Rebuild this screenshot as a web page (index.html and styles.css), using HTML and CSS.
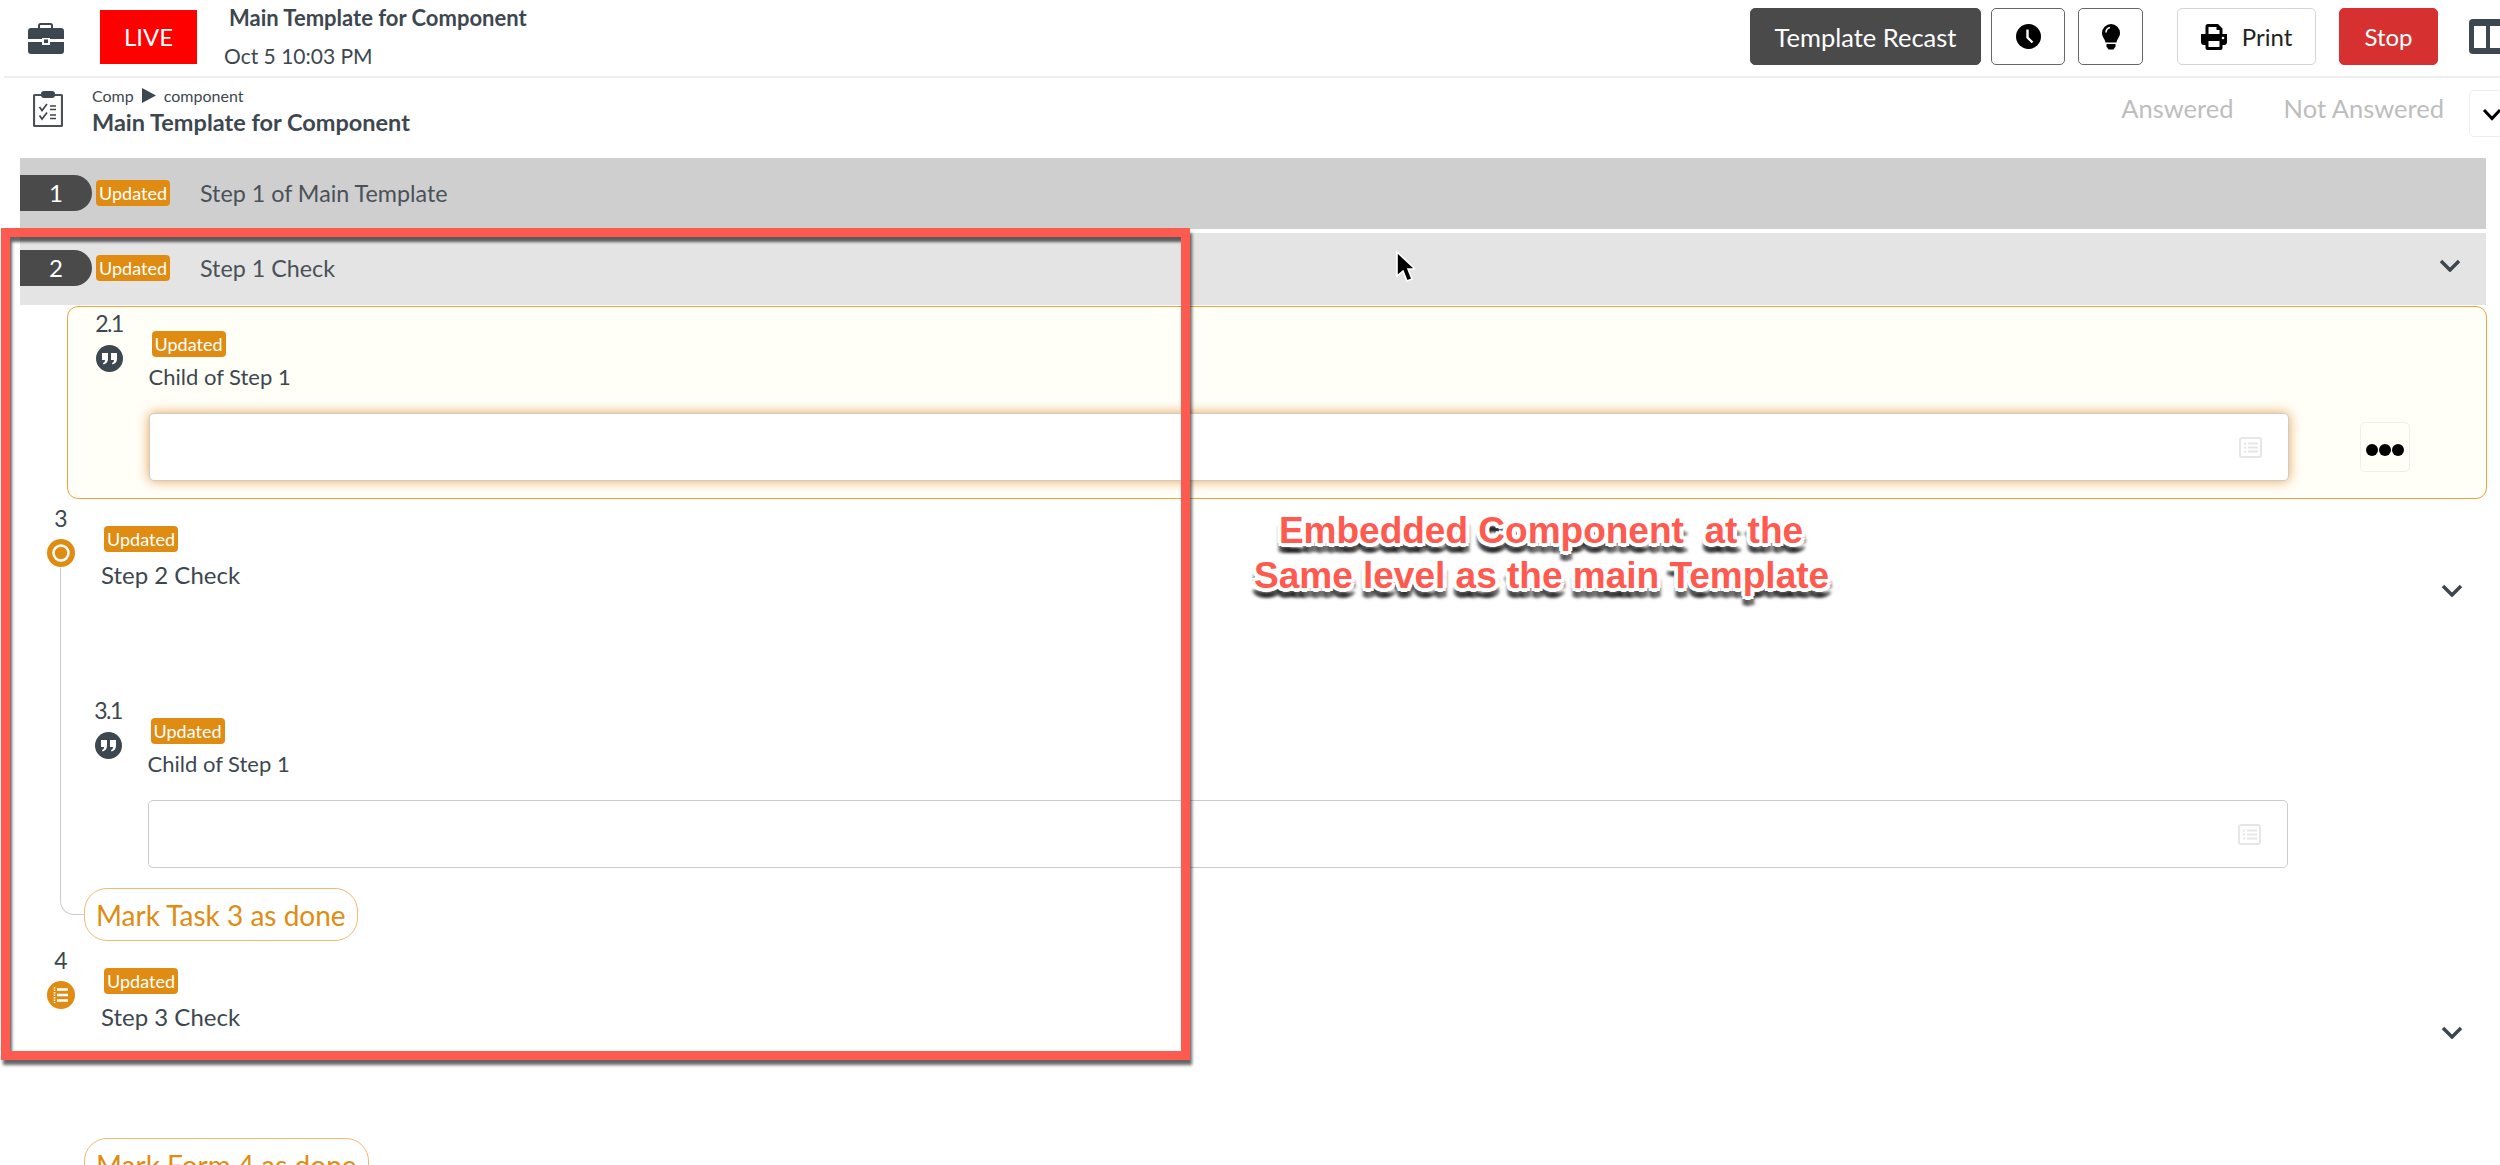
FILE: index.html
```html
<!DOCTYPE html>
<html lang="en">
<head>
<meta charset="utf-8">
<title>Main Template for Component</title>
<link rel="stylesheet" href="styles.css">
</head>
<body>
<header class="topbar">
  <svg class="ic-brief" viewBox="0 0 36 31"><path fill="none" stroke="#3d4750" stroke-width="2" d="M11 6V2.500a1.500 1.500 0 0 1 1.500-1.500h10a1.500 1.500 0 0 1 1.500 1.500V6"/><path fill="#3d4750" d="M3 5h30a3 3 0 0 1 3 3v8H22v-1h-8v1H0V8a3 3 0 0 1 3-3zM0 19h14v3h8v-3h14v9a3 3 0 0 1-3 3H3a3 3 0 0 1-3-3z"/><rect x="16" y="16.500" width="4" height="3.500" fill="#3d4750"/></svg>
  <div class="live">LIVE</div>
  <div class="run">
    <div class="run-title">Main Template for Component</div>
    <div class="run-date">Oct 5 10:03 PM</div>
  </div>
  <div class="actions">
    <button class="btn btn-dark">Template Recast</button>
    <button class="btn btn-line btn-clock">
      <svg class="ic-clock" viewBox="0 0 25 25"><circle cx="12.500" cy="12.500" r="12.500"/><path d="M11.500 5.500v8l5 5" fill="none" stroke="#fff" stroke-width="2.400"/></svg>
    </button>
    <button class="btn btn-line btn-bulb">
      <svg class="ic-bulb" viewBox="0 0 18 26"><path d="M9 0a9 9 0 0 1 9 9c0 4-3 6-3.500 9.500h-11C3 15 0 13 0 9a9 9 0 0 1 9-9z"/><path d="M4.500 20h9v2.500L11.500 25.500h-5L4.500 22.500z"/><path d="M8 3.500C5.500 4 4 6 4 8.500" fill="none" stroke="#fff" stroke-width="1.500"/></svg>
    </button>
    <button class="btn btn-print">
      <svg class="ic-print" viewBox="0 0 26 26"><path fill-rule="evenodd" d="M7 0h10l4.500 4.500V10H26v8a3 3 0 0 1-3 3h-1.500v3a2 2 0 0 1-2 2h-13a2 2 0 0 1-2-2v-3H3a3 3 0 0 1-3-3v-8h4.500V2.500A2.500 2.500 0 0 1 7 0zM7.500 3v7h11V6h-3V3zM7.500 17v6h11v-6z"/><circle cx="22" cy="14" r="1.300" fill="#fff"/></svg>
      Print
    </button>
    <button class="btn btn-stop">Stop</button>
    <svg class="ic-panes" viewBox="0 0 31 35"><path fill="#3d4750" d="M4 0h27v35H4a4 4 0 0 1-4-4V4a4 4 0 0 1 4-4z"/><rect x="5" y="7" width="12" height="22" fill="#fff"/><rect x="21" y="7" width="10" height="22" fill="#fff"/></svg>
  </div>
</header>

<section class="subhead">
  <svg class="ic-clip" viewBox="0 0 30 36"><rect x="1" y="4" width="28" height="31" rx="1" fill="none" stroke="#4a5158" stroke-width="2.200"/><rect x="8" y="0" width="14" height="7" rx="3" fill="#3d4750"/><path d="M6.500 16l2.500 3.500 5-6.500M6.500 24.500l2.500 3.500 5-6.500" fill="none" stroke="#3d4750" stroke-width="1.700"/><path d="M17 15h6M17 18.500h6M17 24h6M17 27.500h6" stroke="#3d4750" stroke-width="1.700"/></svg>
  <div class="crumbs">
    <div class="crumb-line"><span>Comp</span><svg class="ic-tri" viewBox="0 0 14 15"><path d="M0 0l14 7.500L0 15z" fill="#3d4750"/></svg><span>component</span></div>
    <div class="doc-title">Main Template for Component</div>
  </div>
  <div class="filters">
    <span>Answered</span>
    <span>Not Answered</span>
  </div>
  <div class="drop">
    <svg class="ic-chev-black" viewBox="0 0 20 13"><path d="M2 2l8 8.500L18 2" fill="none" stroke="#000" stroke-width="3"/></svg>
  </div>
</section>

<main class="steps">
  <div class="bar bar-dark">
    <span class="pill-num">1</span>
    <span class="badge">Updated</span>
    <span class="bar-title">Step 1 of Main Template</span>
  </div>
  <div class="bar bar-light">
    <span class="pill-num">2</span>
    <span class="badge">Updated</span>
    <span class="bar-title">Step 1 Check</span>
    <svg class="chev bar-chev" viewBox="0 0 22 13"><path d="M2 2l9 9 9-9" fill="none" stroke="#3d4750" stroke-width="3.500"/></svg>
  </div>

  <div class="child card">
    <div class="rail-child">
      <div class="num num-tight">2.1</div>
      <svg class="dot-quote" viewBox="0 0 27 27"><circle cx="13.500" cy="13.500" r="13.500" fill="#3d4750"/><path fill="#fff" d="M6 8h6v6c0 3-2 5-4.500 5.500L7 18c1.500-.5 2-1.500 2-3H6zM15 8h6v6c0 3-2 5-4.500 5.500L16 18c1.500-.5 2-1.500 2-3h-3z"/></svg>
    </div>
    <div class="child-body">
      <span class="badge badge-in">Updated</span>
      <div class="child-title">Child of Step 1</div>
      <div class="field-row">
        <div class="field field-focus">
          <svg class="ic-table" viewBox="0 0 23 21"><rect x="1" y="1" width="21" height="19" rx="2" fill="none" stroke="#e6e6e6" stroke-width="2"/><path d="M5 6.500h2M9 6.500h10M5 10.500h2M9 10.500h10M5 14.500h2M9 14.500h10" stroke="#e6e6e6" stroke-width="2"/></svg>
        </div>
        <div class="more"><i></i><i></i><i></i></div>
      </div>
    </div>
  </div>

  <div class="task task-line">
    <div class="task-head">
      <div class="rail">
        <div class="num">3</div>
        <svg class="dot-task" viewBox="0 0 28 28"><circle cx="14" cy="14" r="14" fill="#e08c12"/><circle cx="14" cy="14" r="7.500" fill="none" stroke="#fff" stroke-width="2.500"/></svg>
      </div>
      <div class="task-body">
        <span class="badge badge-in">Updated</span>
        <div class="task-title">Step 2 Check</div>
      </div>
      <svg class="chev task-chev" viewBox="0 0 22 13"><path d="M2 2l9 9 9-9" fill="none" stroke="#3d4750" stroke-width="3.500"/></svg>
    </div>
    <div class="child child-plain">
      <div class="rail-child">
        <div class="num num-tight">3.1</div>
        <svg class="dot-quote" viewBox="0 0 27 27"><circle cx="13.500" cy="13.500" r="13.500" fill="#3d4750"/><path fill="#fff" d="M6 8h6v6c0 3-2 5-4.500 5.500L7 18c1.500-.5 2-1.500 2-3H6zM15 8h6v6c0 3-2 5-4.500 5.500L16 18c1.500-.5 2-1.500 2-3h-3z"/></svg>
      </div>
      <div class="child-body">
        <span class="badge badge-in">Updated</span>
        <div class="child-title">Child of Step 1</div>
        <div class="field-row">
          <div class="field">
            <svg class="ic-table" viewBox="0 0 23 21"><rect x="1" y="1" width="21" height="19" rx="2" fill="none" stroke="#e6e6e6" stroke-width="2"/><path d="M5 6.500h2M9 6.500h10M5 10.500h2M9 10.500h10M5 14.500h2M9 14.500h10" stroke="#e6e6e6" stroke-width="2"/></svg>
          </div>
        </div>
      </div>
    </div>
    <div class="mark mark-task">Mark Task 3 as done</div>
  </div>

  <div class="task">
    <div class="task-head">
      <div class="rail">
        <div class="num">4</div>
        <svg class="dot-task" viewBox="0 0 28 28"><circle cx="14" cy="14" r="14" fill="#e08c12"/><path d="M10 8.500h11M10 14h11M10 19.500h11" stroke="#fff" stroke-width="2.400"/><path d="M7.500 6v16" stroke="#fff" stroke-width="1.600" stroke-dasharray="1.500 1"/></svg>
      </div>
      <div class="task-body">
        <span class="badge badge-in">Updated</span>
        <div class="task-title">Step 3 Check</div>
      </div>
      <svg class="chev task-chev" viewBox="0 0 22 13"><path d="M2 2l9 9 9-9" fill="none" stroke="#3d4750" stroke-width="3.500"/></svg>
    </div>
    <div class="mark mark-form">Mark Form 4 as done</div>
  </div>
</main>

<div class="redbox"></div>
<div class="note">Embedded Component  at the
Same level as the main Template</div>
<svg class="cursor" viewBox="0 0 20 31"><path d="M2 1v24l6-5 4 10 5-2-4-10h7z" fill="#000" stroke="#fff" stroke-width="1.600"/></svg>
</body>
</html>
```

FILE: styles.css
```css
* { box-sizing: border-box; }
html, body { margin: 0; padding: 0; background: #fff; }
body {
  position: relative;
  width: 2500px;
  height: 1165px;
  overflow: hidden;
  font-family: Lato, "Open Sans", sans-serif;
  color: #3d4750;
}

/* top bar */
.topbar {
  display: flex;
  align-items: center;
  height: 78px;
  margin-left: 4px;
  padding: 0 0 3px 24px;
  border-bottom: 2px solid #eee;
}
.ic-brief { width: 36px; height: 31px; flex: none; margin-top: 3px; }
.live {
  width: 97px;
  height: 54px;
  margin-left: 36px;
  background: #f00;
  color: #fff;
  font-size: 24px;
  line-height: 54px;
  text-align: center;
}
.run { margin-left: 27px; }
.run-title {
  margin-left: 5px;
  font-size: 22px;
  font-weight: 700;
  line-height: 28px;
}
.run-date {
  margin-top: 10px;
  font-size: 21px;
  line-height: 28px;
}
.actions {
  display: flex;
  align-items: center;
  margin-left: auto;
}
.btn {
  height: 57px;
  border-radius: 5px;
  font-family: inherit;
  font-size: 24px;
  padding: 0;
  display: flex;
  align-items: center;
  justify-content: center;
}
.btn-dark { width: 231px; background: #4a4a4a; border: 1px solid #4a4a4a; color: #fff; font-size: 25.500px; }
.btn-line { background: #fff; border: 1.500px solid #666; }
.btn-clock { width: 74px; margin-left: 10px; }
.btn-bulb { width: 65px; margin-left: 13px; }
.ic-clock { width: 25px; height: 25px; }
.ic-bulb { width: 18px; height: 26px; }
.btn-print {
  width: 139px;
  margin-left: 34px;
  background: #fff;
  border: 1.500px solid #d5d5d5;
  color: #222;
  gap: 15px;
}
.ic-print { width: 26px; height: 26px; }
.btn-stop { width: 99px; margin-left: 23px; background: #d63031; border: 1px solid #d63031; color: #fff; }
.ic-panes { width: 31px; height: 35px; margin-left: 31px; flex: none; }

/* sub header */
.subhead {
  display: flex;
  height: 80px;
  padding-left: 33px;
  position: relative;
}
.ic-clip { width: 30px; height: 36px; margin-top: 13px; flex: none; }
.crumbs { margin-left: 29px; }
.crumb-line {
  display: flex;
  align-items: center;
  height: 24px;
  margin-top: 5px;
  font-size: 16px;
  gap: 8px;
}
.ic-tri { width: 14px; height: 15px; }
.doc-title {
  margin-top: 0;
  font-size: 23.500px;
  font-weight: 700;
  line-height: 30px;
}
.filters {
  display: flex;
  gap: 50px;
  margin-left: auto;
  margin-right: 25px;
  padding-top: 14px;
  color: #bdbdbd;
  font-size: 25.500px;
  line-height: 32px;
}
.drop {
  width: 40px;
  height: 47px;
  margin-top: 12px;
  margin-right: -9px;
  border: 1.500px solid #eee;
  border-radius: 5px;
  display: flex;
  align-items: center;
  padding-left: 12px;
}
.ic-chev-black { width: 20px; height: 13px; margin-top: 2px; flex: none; }

/* steps */
.steps { margin-left: 20px; width: 2468px; }
.bar {
  display: flex;
  align-items: center;
  width: 2466px;
}
.bar-dark { height: 71px; margin-bottom: 4px; background: #cfcfcf; padding-bottom: 1px; }
.bar-light { height: 72px; background: #e4e4e4; padding-bottom: 3px; }
.pill-num {
  width: 72px;
  height: 36px;
  flex: none;
  border-radius: 0 18px 18px 0;
  background: #4a4a4a;
  color: #fff;
  font-size: 24px;
  line-height: 36px;
  text-align: center;
}
.badge {
  display: inline-block;
  width: 74px;
  height: 26px;
  border-radius: 4px;
  background: #e08c12;
  color: #fff;
  font-size: 18px;
  line-height: 26px;
  text-align: center;
}
.bar .badge { margin-left: 4px; flex: none; }
.bar-title { margin-left: 30px; font-size: 23.300px; color: #4a5158; }
.chev { width: 22px; height: 13px; flex: none; }
.bar-chev { margin-left: auto; margin-right: 25px; margin-top: -4px; }

.num { font-size: 23px; line-height: 28px; text-align: center; }
.num-tight { letter-spacing: -1.500px; }

/* child question */
.child { display: flex; }
.card {
  width: 2420px;
  margin-left: 47px;
  margin-top: 1px;
  padding: 2px 0 17px 28px;
  border: 1.500px solid #f0a33c;
  border-radius: 11px;
  background: #fffef7;
}
.child-plain { margin: 99px 0 0 48px; }
.rail-child { width: 26px; flex: none; }
.rail-child .num { margin-left: -2px; width: 30px; }
.dot-quote { display: block; width: 27px; height: 27px; margin-top: 8px; }
.child-body { margin-left: 26.500px; flex: 1; }
.badge-in { margin: 22px 0 0 3px; display: block; }
.child-title { margin-top: 6px; font-size: 22px; line-height: 28px; }
.field-row { display: flex; align-items: center; margin-top: 22px; }
.field {
  width: 2140px;
  height: 68px;
  flex: none;
  display: flex;
  align-items: center;
  justify-content: flex-end;
  padding-right: 26px;
  background: #fff;
  border: 1.500px solid #ccc;
  border-radius: 5px;
}
.field-focus { box-shadow: 0 0 12px rgba(229, 140, 40, .8); }
.ic-table { width: 23px; height: 21px; }
.more {
  display: flex;
  align-items: center;
  justify-content: center;
  gap: 1px;
  width: 50px;
  height: 50px;
  margin-left: 71px;
  padding-top: 6px;
  border: 1.500px solid #eee;
  border-radius: 5px;
}
.more i { width: 12px; height: 12px; border-radius: 50%; background: #000; }

/* tasks */
.task { margin-left: 27px; padding-top: 5px; }
.task-head { display: flex; }
.rail { width: 28px; flex: none; }
.dot-task { display: block; width: 28px; height: 28px; margin-top: 7px; }
.task-body { margin-left: 26px; flex: 1; }
.task-title { margin-top: 9px; font-size: 24px; line-height: 28px; }
.task-chev { margin-top: 80px; margin-right: 25px; }
.mark {
  width: fit-content;
  height: 53px;
  margin-left: 37px;
  padding: 0 11px;
  border: 1.500px solid #f0b870;
  border-radius: 23px;
  background: #fff;
  color: #e08c12;
  font-size: 28px;
  line-height: 52px;
}
.mark-task { margin-top: 20px; }
.mark-form { margin-top: 99px; }

/* connector of task 3 */
.task-line { position: relative; }
.task-line::before {
  content: "";
  position: absolute;
  left: 13px;
  top: 69px;
  width: 24px;
  height: 346px;
  border-left: 1.500px solid #ccc;
  border-bottom: 1.500px solid #ccc;
  border-bottom-left-radius: 14px;
}

/* annotation overlays */
.redbox {
  position: absolute;
  left: 1px;
  top: 228px;
  width: 1189px;
  height: 832px;
  border: 9.500px solid #ff5a4f;
  box-shadow: 2px 5px 3px rgba(0, 0, 0, .6), inset 2px 5px 3px rgba(0, 0, 0, .6);
}
.note {
  position: absolute;
  left: 1254px;
  top: 508px;
  width: 574px;
  white-space: pre;
  text-align: center;
  font-family: "Liberation Sans", Arial, sans-serif;
  font-weight: 700;
  font-size: 37px;
  line-height: 45px;
  color: #ff5a4f;
  text-shadow:
    1px 1px 0 #fff, -1px -1px 0 #fff, 1px -1px 0 #fff, -1px 1px 0 #fff,
    4px 0 0 #fff, -4px 0 0 #fff, 0 4px 0 #fff, 0 -4px 0 #fff,
    3px 3px 0 #fff, -3px 3px 0 #fff, 3px -3px 0 #fff, -3px -3px 0 #fff,
    4px 9px 3px rgba(0, 0, 0, .55), -3px 9px 3px rgba(0, 0, 0, .55), 0 10px 3px rgba(0, 0, 0, .5);
}
.cursor {
  position: absolute;
  left: 1395px;
  top: 251px;
  width: 20px;
  height: 31px;
}
```
